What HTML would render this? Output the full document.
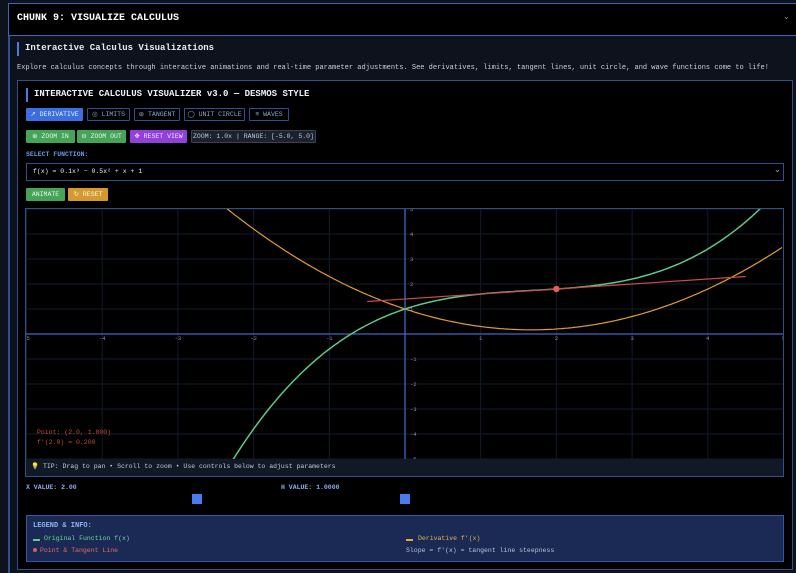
<!DOCTYPE html>
<html><head><meta charset="utf-8"><style>
*{margin:0;padding:0;box-sizing:border-box}
body{width:796px;height:573px;background:#0d121d;font-family:"Liberation Mono",monospace;overflow:hidden;position:relative;color:#dde3ee}
.a{position:absolute;white-space:nowrap}
.btn{position:absolute;height:13px;font-size:6.5px;line-height:11px;text-align:center;border:1px solid #2f4f8f;color:#8fa6cc;border-radius:1px}
</style></head><body>
<div class="a" style="left:8px;top:3px;width:792px;height:33px;background:#000;border:1.5px solid #3f66b8"></div>
<div class="a" style="left:17px;top:13px;font-size:10px;font-weight:bold;color:#fff">CHUNK 9: VISUALIZE CALCULUS</div>
<div class="a" style="left:783px;top:12px;font-size:8px;color:#8899aa">⌄</div>
<div class="a" style="left:8px;top:36px;width:1.5px;height:537px;background:#2f4f8f"></div>
<div class="a" style="left:17px;top:42px;width:2px;height:14px;background:#4a7be0"></div>
<div class="a" style="left:25px;top:43px;font-size:9px;font-weight:bold;color:#e8edf5">Interactive Calculus Visualizations</div>
<div class="a" style="left:17px;top:64px;font-size:7px;color:#c9d1de">Explore calculus concepts through interactive animations and real-time parameter adjustments. See derivatives, limits, tangent lines, unit circle, and wave functions come to life!</div>
<div class="a" style="left:17px;top:80px;width:776px;height:490px;background:#000;border:1px solid #2f4f8f"></div>
<div class="a" style="left:26px;top:88px;width:2px;height:14px;background:#4a7be0"></div>
<div class="a" style="left:34px;top:89px;font-size:9px;font-weight:bold;color:#eef2f8">INTERACTIVE CALCULUS VISUALIZER v3.0 — DESMOS STYLE</div>

<div class="btn" style="left:26px;top:108px;width:57px;background:#3b6fe0;border-color:#3b6fe0;color:#e8eeff">↗ DERIVATIVE</div>
<div class="btn" style="left:87px;top:108px;width:43px">◎ LIMITS</div>
<div class="btn" style="left:134px;top:108px;width:46px">⊛ TANGENT</div>
<div class="btn" style="left:184px;top:108px;width:61px">◯ UNIT CIRCLE</div>
<div class="btn" style="left:249px;top:108px;width:40px">≡ WAVES</div>

<div class="btn" style="left:26px;top:130px;width:49px;background:#46a35a;border-color:#46a35a;color:#e6f5e8">⊕ ZOOM IN</div>
<div class="btn" style="left:77px;top:130px;width:49px;background:#46a35a;border-color:#46a35a;color:#e6f5e8">⊖ ZOOM OUT</div>
<div class="btn" style="left:130px;top:130px;width:57px;background:#9140dc;border-color:#9140dc;color:#f3e8ff">✥ RESET VIEW</div>
<div class="btn" style="left:191px;top:130px;width:125px;background:#1b212d;border-color:#3a4150;color:#c0c7d3">ZOOM: 1.0x | RANGE: [-5.0, 5.0]</div>

<div class="a" style="left:26px;top:151px;font-size:6.5px;font-weight:bold;color:#6b9ae8">SELECT FUNCTION:</div>
<div class="a" style="left:26px;top:163px;width:758px;height:18px;border:1px solid #2f4f8f;background:#000"></div>
<div class="a" style="left:33px;top:168px;font-size:6.5px;color:#e6ebf2">f(x) = 0.1x³ − 0.5x² + x + 1</div>
<div class="a" style="left:774px;top:165px;font-size:8px;color:#aab">⌄</div>

<div class="btn" style="left:26px;top:188px;width:39px;background:#46a35a;border-color:#46a35a;color:#e6f5e8">ANIMATE</div>
<div class="btn" style="left:68px;top:188px;width:40px;background:#d49a2e;border-color:#d49a2e;color:#fff3dd">↻ RESET</div>

<div class="a" style="left:25px;top:208px;width:759px;height:269px;border:1px solid #2f4f8f;background:#111826"></div>
<svg class="a" style="left:26px;top:209px;background:#000" width="757" height="250" id="g"></svg>
<div class="a" style="left:31px;top:462px;font-size:6.5px;color:#c4cbd6">💡 TIP: Drag to pan • Scroll to zoom • Use controls below to adjust parameters</div>

<div class="a" style="left:26px;top:484px;font-size:6.5px;font-weight:bold;color:#8fb0e8">X VALUE: 2.00</div>
<div class="a" style="left:281px;top:484px;font-size:6.5px;font-weight:bold;color:#8fb0e8">H VALUE: 1.0000</div>
<div class="a" style="left:192px;top:494px;width:10px;height:10px;background:#4a7cf0"></div>
<div class="a" style="left:400px;top:494px;width:10px;height:10px;background:#4a7cf0"></div>

<div class="a" style="left:26px;top:515px;width:758px;height:47px;background:#1a2a55;border:1px solid #3556a5"></div>
<div class="a" style="left:33px;top:522px;font-size:7px;font-weight:bold;color:#8fb4f0">LEGEND &amp; INFO:</div>
<div class="a" style="left:33px;top:539px;width:7px;height:2px;background:#5fcf8a"></div>
<div class="a" style="left:44px;top:535px;font-size:6.5px;color:#6fd79a">Original Function f(x)</div>
<div class="a" style="left:33px;top:548px;width:4px;height:4px;border-radius:50%;background:#e05a5a"></div>
<div class="a" style="left:40px;top:547px;font-size:6.5px;color:#e06a6a">Point &amp; Tangent Line</div>
<div class="a" style="left:406px;top:539px;width:7px;height:2px;background:#e7a840"></div>
<div class="a" style="left:418px;top:535px;font-size:6.5px;color:#eab04a">Derivative f'(x)</div>
<div class="a" style="left:406px;top:547px;font-size:6.5px;color:#b8c2d4">Slope = f'(x) = tangent line steepness</div>

<script>
(function(){
var s=document.getElementById('g'),W=757,H=250,ox=379,oy=125,ux=75.7,uy=25,h='';
for(var k=-5;k<=5;k++){var x=ox+k*ux;h+='<line x1="'+x+'" y1="0" x2="'+x+'" y2="'+H+'" stroke="#141b2b" stroke-width="1"/>';}
for(var k=-5;k<=5;k++){var y=oy-k*uy;h+='<line x1="0" y1="'+y+'" x2="'+W+'" y2="'+y+'" stroke="#141b2b" stroke-width="1"/>';}
h+='<line x1="0" y1="'+oy+'" x2="'+W+'" y2="'+oy+'" stroke="#3f66c8" stroke-width="1.3"/>';
h+='<line x1="'+ox+'" y1="0" x2="'+ox+'" y2="'+H+'" stroke="#3f66c8" stroke-width="1.3"/>';
for(var k=-5;k<=5;k++){if(!k)continue;h+='<text x="'+(ox+k*ux)+'" y="'+(oy+6)+'" font-size="5.5" fill="#8a94a8" text-anchor="middle" font-family="Liberation Mono">'+k+'</text>';
h+='<text x="'+(ox+5)+'" y="'+(oy-k*uy+2)+'" font-size="5.5" fill="#8a94a8" font-family="Liberation Mono">'+k+'</text>';}
function p(f){var d='';for(var i=0;i<=W;i+=2){var X=(i-ox)/ux,Y=oy-f(X)*uy;if(Y<-50)Y=-50;if(Y>H+50)Y=H+50;d+=(i?'L':'M')+i+' '+Y.toFixed(1);}return d;}
h+='<path d="'+p(function(x){return 0.3*x*x-x+1})+'" fill="none" stroke="#e39a35" stroke-width="1.2"/>';
h+='<path d="'+p(function(x){return 0.1*x*x*x-0.5*x*x+x+1})+'" fill="none" stroke="#5cc98a" stroke-width="1.5"/>';
var x1=-0.5,x2=4.5;
h+='<line x1="'+(ox+x1*ux)+'" y1="'+(oy-(1.8+0.2*(x1-2))*uy)+'" x2="'+(ox+x2*ux)+'" y2="'+(oy-(1.8+0.2*(x2-2))*uy)+'" stroke="#d04a4a" stroke-width="1.2"/>';
h+='<circle cx="'+(ox+2*ux)+'" cy="'+(oy-1.8*uy)+'" r="3.2" fill="#ea5a5a"/>';
h+='<text x="11" y="225" font-size="6.5" fill="#c8463f" font-family="Liberation Mono">Point: (2.0, 1.800)</text>';
h+='<text x="11" y="235" font-size="6.5" fill="#c8463f" font-family="Liberation Mono">f\'(2.0) = 0.200</text>';
s.innerHTML=h;})();
</script>
</body></html>
